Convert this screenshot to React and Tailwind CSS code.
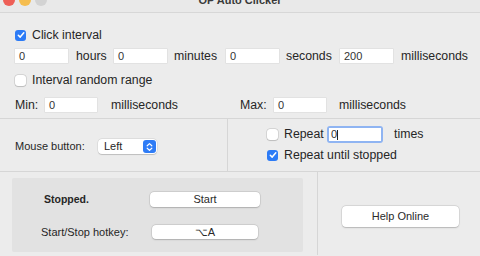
import React from "react";

function Check({ checked }) {
  return checked ? (
    <div className="w-[11px] h-[11px] rounded-[3px] bg-[#2c7bf6] flex items-center justify-center shrink-0">
      <svg width="8" height="8" viewBox="0 0 8 8">
        <path d="M1.3 4.2 L3.2 6.1 L6.8 1.8" stroke="white" strokeWidth="1.5" fill="none" strokeLinecap="round" strokeLinejoin="round" />
      </svg>
    </div>
  ) : (
    <div className="w-[11px] h-[11px] rounded-[3px] bg-white shadow-[0_0_0_0.5px_rgba(0,0,0,0.18),0_0.5px_1px_rgba(0,0,0,0.12)] shrink-0" />
  );
}

function Field({ value, w }) {
  return (
    <div
      className={`${w} h-[14px] bg-white shadow-[0_0_0_0.5px_rgba(0,0,0,0.08)] flex items-center pl-[4px] text-[11px] text-[#333] shrink-0`}
    >
      {value}
    </div>
  );
}

function Btn({ children, cls }) {
  return (
    <div
      className={`${cls} bg-white rounded-[4px] shadow-[0_0_0_0.5px_rgba(0,0,0,0.12),0_0.5px_1.5px_rgba(0,0,0,0.18)] flex items-center justify-center text-[11px] text-[#2a2a2a] shrink-0`}
    >
      {children}
    </div>
  );
}

export default function App() {
  return (
    <div
      className="w-[480px] h-[256px] bg-[#ececec] overflow-hidden text-[#262626] text-[12.3px] leading-none"
      style={{ fontFamily: '"Liberation Sans", Arial, sans-serif' }}
    >
      {/* title bar */}
      <div className="h-[13px] overflow-hidden border-b border-[#d7d7d7] bg-[#e9e9e9]">
        <div className="-mt-[10px] h-[20px] grid grid-cols-[1fr_auto_1fr] items-center">
          <div className="flex items-center gap-[4px] pl-[3px]">
            <div className="w-[12px] h-[12px] rounded-full bg-[#ee5f57]" />
            <div className="w-[12px] h-[12px] rounded-full bg-[#f5bd4f]" />
            <div className="w-[12px] h-[12px] rounded-full bg-[#d3d3d3]" />
          </div>
          <div className="text-[11px] font-bold text-[#3a3a3a] pt-[1px]">OP Auto Clicker</div>
          <div />
        </div>
      </div>

      {/* section 1 */}
      <div className="border-b border-[#d6d6d6] pl-[15px] pt-[15px] pb-[6px]">
        <div className="h-[14px] flex items-center">
          <Check checked />
          <span className="ml-[6px]">Click interval</span>
        </div>
        <div className="h-[14px] mt-[7px] flex items-center">
          <Field value="0" w="w-[53px]" />
          <div className="w-[46px] pl-[8px]">hours</div>
          <Field value="0" w="w-[53px]" />
          <div className="w-[59px] pl-[7px]">minutes</div>
          <Field value="0" w="w-[53px]" />
          <div className="w-[61px] pl-[7px]">seconds</div>
          <Field value="200" w="w-[53px]" />
          <div className="pl-[8px]">milliseconds</div>
        </div>
        <div className="h-[14px] mt-[10px] flex items-center">
          <Check />
          <span className="ml-[6px]">Interval random range</span>
        </div>
        <div className="h-[14px] mt-[11px] flex items-center">
          <div className="w-[30px]">Min:</div>
          <Field value="0" w="w-[52px]" />
          <div className="w-[143px] pl-[14px]">milliseconds</div>
          <div className="w-[34px]">Max:</div>
          <Field value="0" w="w-[52px]" />
          <div className="pl-[13px]">milliseconds</div>
        </div>
      </div>

      {/* section 2 */}
      <div className="h-[53px] border-b border-[#d6d6d6] flex">
        <div className="w-[228px] border-r border-[#d6d6d6] flex items-center pl-[15px] pt-[3px]">
          <div className="w-[83px] text-[11px]">Mouse button:</div>
          <div className="w-[59px] h-[15px] bg-white rounded-[4px] shadow-[0_0_0_0.5px_rgba(0,0,0,0.1),0_0.5px_1px_rgba(0,0,0,0.15)] flex items-center justify-between pl-[6px] pr-[1px] text-[11px]">
            <span>Left</span>
            <div className="w-[13px] h-[13px] rounded-[3px] bg-[#2f7cf6] flex items-center justify-center">
              <svg width="7" height="10" viewBox="0 0 7 10">
                <path d="M1.2 3.8 L3.5 1.6 L5.8 3.8 M1.2 6.2 L3.5 8.4 L5.8 6.2" stroke="white" strokeWidth="1.2" fill="none" strokeLinecap="round" strokeLinejoin="round" />
              </svg>
            </div>
          </div>
        </div>
        <div className="flex-1 pl-[39px] pt-[7px]">
          <div className="h-[17px] flex items-center">
            <Check />
            <span className="ml-[6px] w-[43px]">Repeat</span>
            <div className="w-[56px] h-[17px] rounded-[3px] bg-[#8fb4f2] p-[2px]">
              <div className="w-full h-full bg-white flex items-center pl-[2px] text-[11px] text-[#333]">
                0<span className="inline-block w-[1px] h-[10px] bg-[#222]" />
              </div>
            </div>
            <span className="ml-[11px]">times</span>
          </div>
          <div className="h-[14px] mt-[5px] flex items-center">
            <Check checked />
            <span className="ml-[6px]">Repeat until stopped</span>
          </div>
        </div>
      </div>

      {/* section 3 */}
      <div className="flex h-[83px]">
        <div className="w-[318px] border-r border-[#d6d6d6] pl-[12px] pt-[6px]">
          <div className="w-[291px] h-[74px] bg-[#e2e2e2] rounded-[2px] pt-[14px]">
            <div className="flex items-center h-[15px]">
              <div className="w-[106px] ml-[32px] text-[10.5px] font-bold">Stopped.</div>
              <Btn cls="w-[110px] h-[15px]">Start</Btn>
            </div>
            <div className="flex items-center h-[14px] mt-[18px]">
              <div className="w-[111px] ml-[29px] text-[11px]">Start/Stop hotkey:</div>
              <Btn cls="w-[106px] h-[14px]">⌥A</Btn>
            </div>
          </div>
        </div>
        <div className="flex-1 pl-[24px] pt-[34px]">
          <Btn cls="w-[117px] h-[21px]">Help Online</Btn>
        </div>
      </div>
    </div>
  );
}
